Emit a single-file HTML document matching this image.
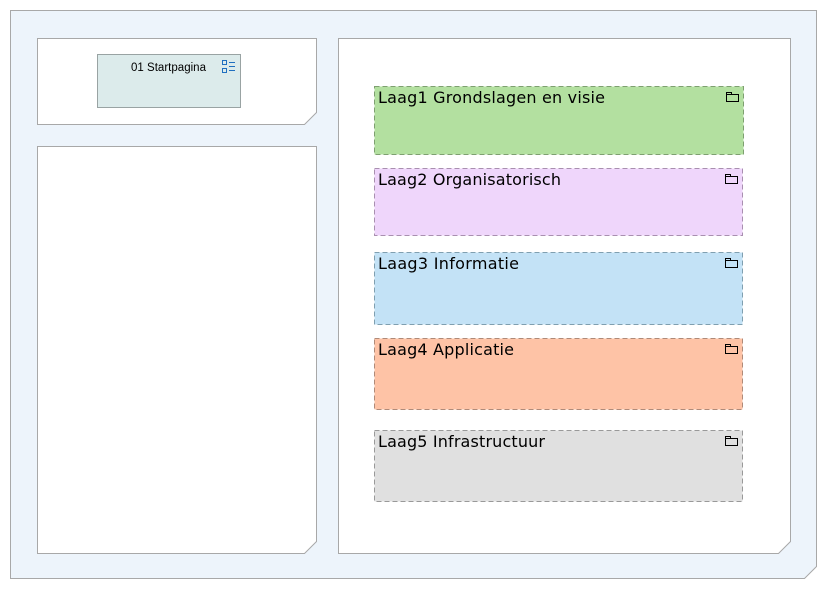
<!DOCTYPE html>
<html><head><meta charset="utf-8"><style>html,body{margin:0;padding:0;background:#fff;width:828px;height:589px;overflow:hidden}</style></head>
<body>
<svg width="828" height="589" viewBox="0 0 828 589" xmlns="http://www.w3.org/2000/svg" font-family="DejaVu Sans, Liberation Sans, sans-serif">
<path d="M10.5 10.5H816.5V566.5L804.5 578.5H10.5Z" fill="#edf4fb" stroke="#a8a8a8"/>
<path d="M37.5 38.5H316.5V112.5L304.5 124.5H37.5Z" fill="#fff" stroke="#a8a8a8"/>
<path d="M37.5 146.5H316.5V541.5L304.5 553.5H37.5Z" fill="#fff" stroke="#a8a8a8"/>
<path d="M338.5 38.5H790.5V541.5L778.5 553.5H338.5Z" fill="#fff" stroke="#a8a8a8"/>
<rect x="97.5" y="54.5" width="143" height="53" fill="#dcebeb" stroke="#99a3a3"/>
<text x="131" y="71" font-size="11.5" font-family="Liberation Sans, sans-serif" textLength="75" fill="#000">01 Startpagina</text>
<g fill="none" stroke="#1f6fc0" stroke-width="1">
<rect x="222.5" y="60.5" width="4" height="4"/><rect x="222.5" y="68.5" width="4" height="4"/>
<path d="M229 62.5H235M229 66.5H235M229 70.5H235"/>
</g>
<g font-size="16" fill="#000">
<rect x="374.5" y="86.5" width="369" height="68" fill="#b3e0a0" stroke="#7ea070" stroke-dasharray="5,3"/>
<text x="378" y="103" textLength="227">Laag1 Grondslagen en visie</text>
<rect x="374.5" y="168.5" width="368" height="67" fill="#efd6fb" stroke="#a98fb0" stroke-dasharray="5,3"/>
<text x="378" y="185" textLength="183">Laag2 Organisatorisch</text>
<rect x="374.5" y="252.5" width="368" height="72" fill="#c3e2f6" stroke="#7f9fb0" stroke-dasharray="5,3"/>
<text x="378" y="269" textLength="141">Laag3 Informatie</text>
<rect x="374.5" y="338.5" width="368" height="71" fill="#fec3a6" stroke="#b08a78" stroke-dasharray="5,3"/>
<text x="378" y="355" textLength="136">Laag4 Applicatie</text>
<rect x="374.5" y="430.5" width="368" height="71" fill="#e0e0e0" stroke="#999" stroke-dasharray="5,3"/>
<text x="378" y="447" textLength="167">Laag5 Infrastructuur</text>
</g>
<g fill="none" stroke="#000" stroke-width="1">
<path d="M726.5 92.5H731.5V94.5H738.5V101.5H726.5ZM726.5 94.5H731.5"/>
<path d="M725.5 174.5H730.5V176.5H737.5V183.5H725.5ZM725.5 176.5H730.5"/>
<path d="M725.5 258.5H730.5V260.5H737.5V267.5H725.5ZM725.5 260.5H730.5"/>
<path d="M725.5 344.5H730.5V346.5H737.5V353.5H725.5ZM725.5 346.5H730.5"/>
<path d="M725.5 436.5H730.5V438.5H737.5V445.5H725.5ZM725.5 438.5H730.5"/>
</g>
</svg>
</body></html>
